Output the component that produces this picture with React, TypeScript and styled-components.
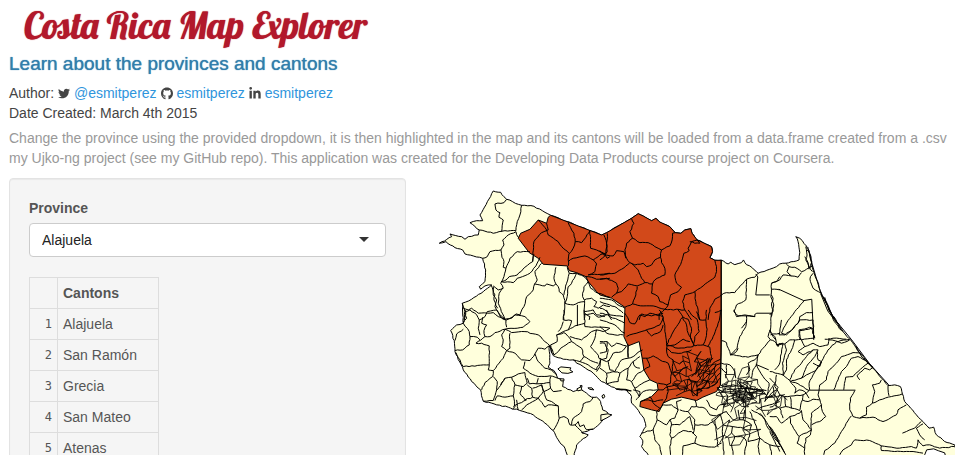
import React, { useState } from "react";
import styled, { createGlobalStyle } from "styled-components";
import { FaGithub, FaLinkedinIn, FaTwitter } from "react-icons/fa";

const GlobalStyle = createGlobalStyle`
  *, *::before, *::after { box-sizing: border-box; }
  body {
    margin: 0;
    background: #fff;
    color: #555;
    font-family: "Liberation Sans", Arial, sans-serif;
    font-size: 14px;
    line-height: 20px;
  }
`;

const Page = styled.div`
  height: 100vh;
  padding-left: 9px;
  overflow: hidden;
`;

const Title = styled.h1`
  margin: 0;
  padding: 4px 0 0 15px;
  color: #b2182b;
  font-family: Lobster, "Liberation Serif", serif;
  font-size: 37px;
  font-weight: 400;
  line-height: 42px;
  text-shadow: 0 0 1px #b2182b;
  white-space: nowrap;
`;

const Subtitle = styled.h2`
  margin: 8px 0 9px;
  color: #317eac;
  font-size: 19px;
  font-weight: 400;
  line-height: 20px;
  text-shadow: 0 0 1px #317eac;
`;

const Meta = styled.p`
  margin: 0;
  color: #444;
  svg {
    height: 13px;
    width: 12px;
    vertical-align: -2px;
    color: #444;
  }
`;

const ProfileLink = styled.a`
  color: #2f95dc;
  text-decoration: none;
`;

const Description = styled.p`
  margin: 5px 0 10px;
  color: #999;
  white-space: nowrap;
`;

const Layout = styled.main`
  display: grid;
  grid-template-columns: 42% 58%;
  align-items: start;
`;

const Sidebar = styled.form`
  padding: 19px;
  border: 1px solid #e3e3e3;
  border-radius: 4px;
  background: #f5f5f5;
  box-shadow: inset 0 1px 1px rgba(0, 0, 0, 0.05);
`;

const FieldLabel = styled.label`
  display: block;
  margin-bottom: 5px;
  font-weight: 700;
`;

const SelectWrap = styled.div`
  position: relative;
  margin-bottom: 20px;
`;

const ProvinceSelect = styled.select`
  display: block;
  width: 100%;
  height: 34px;
  padding: 0 12px;
  border: 1px solid #ccc;
  border-radius: 4px;
  background: #fff;
  color: #222;
  font: inherit;
  appearance: none;
`;

const Caret = styled.span`
  position: absolute;
  top: 14px;
  right: 17px;
  border: 5px solid transparent;
  border-top-color: #333;
  border-bottom: 0;
  pointer-events: none;
`;

const CantonTable = styled.table`
  border-collapse: collapse;
`;

const Cell = styled.td`
  height: 31px;
  min-width: 101px;
  padding: 5px;
  border: 1px solid #ddd;
  text-align: left;
`;

const IndexCell = styled(Cell)`
  min-width: 28px;
  font-family: "DejaVu Sans Mono", monospace;
  font-size: 12px;
  text-align: right;
`;

const Map = styled.svg`
  display: block;
  width: 100%;
  height: auto;
`;

type Point = [number, number];

const parse = (text: string): Point[] =>
  text.trim().split(/\s+/).map((pair) => pair.split(",").map(Number) as Point);

const noise = (n: number) => {
  const v = Math.sin(n * 12.9898) * 43758.5453;
  return v - Math.floor(v) - 0.5;
};

/* Breaks long segments into short ones with a small sideways wobble. */
const roughPath = (points: Point[], step: number, amount: number, closed = false) => {
  const list = closed ? [...points, points[0]] : points;
  const out: string[] = [`M${list[0].join(" ")}`];
  for (let i = 1; i < list.length; i++) {
    const [ax, ay] = list[i - 1];
    const [bx, by] = list[i];
    const length = Math.hypot(bx - ax, by - ay) || 1;
    const parts = Math.max(1, Math.round(length / step));
    for (let k = 1; k <= parts; k++) {
      const t = k / parts;
      const off = k === parts ? 0 : noise(ax * 3 + by * 7 + k * 5) * amount;
      const x = ax + (bx - ax) * t - ((by - ay) / length) * off;
      const y = ay + (by - ay) * t + ((bx - ax) / length) * off;
      out.push(`L${x.toFixed(1)} ${y.toFixed(1)}`);
    }
  }
  return out.join("") + (closed ? "Z" : "");
};

const straightPath = (text: string, closed = false) =>
  "M" + parse(text).map((p) => p.join(" ")).join("L") + (closed ? "Z" : "");

/* A tangle of very small districts. */
const meshPath = (cx: number, cy: number, rx: number, ry: number, step: number) => {
  const cols = Math.ceil(rx / step);
  const rows = Math.ceil(ry / step);
  const at = (i: number, j: number): Point => [
    cx + (i + noise(i * 17 + j * 31 + cx) * 1.3) * step,
    cy + (j + noise(i * 41 + j * 13 + cy) * 1.3) * step,
  ];
  const inside = (i: number, j: number) => Math.hypot((i * step) / rx, (j * step) / ry) <= 1;
  let d = "";
  for (let i = -cols; i <= cols; i++) {
    for (let j = -rows; j <= rows; j++) {
      if (!inside(i, j)) continue;
      const here = at(i, j).map((v) => v.toFixed(1)).join(" ");
      if (inside(i + 1, j) && noise(i * 7 + j * 3) > -0.38) d += `M${here}L${at(i + 1, j).map((v) => v.toFixed(1)).join(" ")}`;
      if (inside(i, j + 1) && noise(i * 5 + j * 11) > -0.38) d += `M${here}L${at(i, j + 1).map((v) => v.toFixed(1)).join(" ")}`;
    }
  }
  return d;
};

const LAND = `493.3,191 500.7,192.3 504,196.7 506.7,199.3 521.7,205.3 534,206.3 550.7,215.3 601.7,235 606.7,232.7
631.7,218.3 638.3,213.7 643.3,216 651.7,220.7 656,218.3 659.3,221.7 670,226.7 675.3,232.7 681,233.3 685,230 691,228.7
692.3,233.3 697.3,240 703.3,242.7 711.7,246.7 712.7,251.7 710,257.7 715,260.3 721.7,260.3 728.3,264 731,262.3
735,264.7 741.7,262.7 743.7,260 746.7,264.7 752.7,268 758.3,273.3 770,269.3 776.7,266.7 780,264 786,263.3
799.3,260 800,252.7 798.3,241.7 796,236.7 800,238.3 806.7,246 809.3,250.7 813.3,270 821.7,293.3 833.3,316.7
841.7,330 851,340 860,353.3 871.7,366.7 888.3,385.7 895,385 900.7,386.7 902.7,394 905,401.7 916.7,415
923.3,421.7 929.3,428.3 934,427.3 936.7,435 945,441.7 955,445 959,460 650,460 648.3,455 641.7,446.7 643,441 640,436.7
646,426.7 644,418.3 636.7,408.3 631.7,403.3 631.7,396.7 626.7,390 616.7,389.3 606.7,384 601.7,381.7
593.3,373.3 583.3,366.7 576.7,363.3 573.3,360 563.3,359.3 553.3,355.7 549.3,346 550,363.3 548.3,367.3 556,374
557.7,378.3 563.3,380 562.7,386.7 573.3,391.7 580,388.3 586.7,393.3 591.7,397.3 596.7,397.3 600.7,401.7 602.7,410
608.3,413.3 601.7,421.7 593.3,429.3 581.7,432.7 588.3,435 576.7,445 573.3,460 567.3,455 565,448.3 558.3,440
553.3,430.7 545,423.3 533.3,415 516.7,409.3 512.7,409.3 508.3,407.3 496.7,405 483.3,401.3 480.7,390 471.7,381.7
463.3,370 455,351.7 454.3,340.7 450.7,330.7 456.7,325 463.3,323.3 462.7,315 462.3,303.3 471.7,299.3 483.3,291.7
491.7,285 485,286 480.7,289.3 479.3,286.7 485,281.7 485.7,270 482.7,258.3 473.3,256 465,254 462.7,250 455,247.7
446,241.7 439.3,243.3 451.7,236.7 450,234 461.7,236.7 465,239.3 468.3,236.7 478.3,235 479.3,230 470,222.7
476.7,220.7 482.7,220.7 480,215`;

const ALAJUELA = `550.7,215.3 601.7,235 606.7,232.7 631.7,218.3 638.3,213.7 643.3,216 651.7,220.7 656,218.3 659.3,221.7
670,226.7 675.3,232.7 681,233.3 685,230 691,228.7 692.3,233.3 697.3,240 703.3,242.7 711.7,246.7 712.7,251.7
710,257.7 715,260.3 721.3,260.3 721.3,353 720.7,385 716.7,391.7 703,397.3 696.7,400.7 681.7,397.3 671.7,399.3 663.3,403.3
659.3,411.7 651.7,410 640,406.7 640.7,401.7 651.7,396.7 658.3,390 657.3,383.3 650,380 644,370 642.3,358.3
639.3,341.7 628.3,346 624,336.7 625,310 625,307.3 611.7,298.3 600,295 596.7,291.7 588.3,281.7 586,276.7
576.7,272.7 569.3,270.7 567.3,266 543.3,264.3 538.3,258.3 529.3,252.7 518.3,238.3 520.7,233.3 530,229.3
538.3,220 546.7,223.3 548.3,217.3`;

const SHEETS: { x: number; y: number; lines: string[] }[] = [
  {
    x: 430,
    y: 180,
    lines: [
      "230,58 222,68 195,72 198,90 210,98 207,112 220,120 215,155",
      "148,150 190,160 225,152 258,152 262,125 270,105 275,76",
      "265,172 258,155 235,165 218,180 222,195 213,210 180,215 172,230 158,235",
      "213,210 216,232 222,245 220,262 228,265 222,290 212,310 220,325 205,330 190,318",
      "228,265 240,235 262,215 300,215",
      "312,222 308,245 285,262 262,285 238,290 225,302 214,305 250,308 262,295 300,280 318,258 330,232",
      "335,250 315,275 322,300 314,312 345,318 350,312 370,318 378,312 372,295 378,262",
      "314,312 310,330 290,350 282,380 270,405 258,402 245,415 225,418",
      "225,418 205,370 208,340 218,325",
      "190,320 190,345 200,360 195,380 210,405 225,418",
      "183,315 195,345 192,360 203,385",
      "378,312 385,320 388,335 400,345 405,362 402,420",
      "412,262 418,280 410,310 402,345",
      "418,280 440,280 462,290 475,305 462,320 458,350 464,362 463,420",
      "440,280 425,310 415,320 412,350 405,370 430,375 445,368 463,365",
      "463,360 485,355 500,365 492,380 505,385 520,375 540,380",
      "475,305 482,325 505,340 540,352",
      "325,120 350,150 355,165 385,185 400,205 417,220",
      "350,130 355,150 335,158 312,185 308,245",
      "415,128 425,150 432,160 436,185 430,205 417,222 415,258",
      "436,185 455,188 468,172 480,152",
      "480,152 482,205 500,210 522,220 532,235 540,230",
      "415,245 430,235 465,228 490,240 500,252 495,275 475,285 540,280",
      "468,290 485,292 500,298 540,295",
      "522,165 530,190 528,220 510,225 490,240",
      "100,385 115,390 125,385 145,400 190,398 205,410 225,418",
      "97,370 105,395 103,420", "463,395 490,390 500,405 525,410", "465,400 480,410 478,420",
    ],
  },
  {
    x: 600,
    y: 180,
    lines: [
      "22,160 20,190 22,215 15,228 0,240",
      "0,212 12,225 40,228 50,212 72,215 80,235 90,248",
      "95,115 102,130 90,155 98,175 80,190 75,210 78,235",
      "98,175 120,188 145,188 165,200 185,210 182,232 165,240 155,255 140,260 130,250 105,255 90,248",
      "185,210 210,198 217,180 218,160 226,158",
      "182,232 185,248 195,265 195,285 165,300 158,312 135,308 125,295 115,270 95,250",
      "90,248 65,268 45,280 0,285", "0,298 20,295 50,310 55,325 50,340 35,352",
      "50,340 65,335 85,312 112,318 135,308",
      "112,320 108,345 98,372 75,382", "98,372 130,378 160,378 195,388",
      "158,312 155,340 175,350 180,365 205,375 195,388",
      "292,180 275,185 265,205 268,212 252,220 245,245 225,285 230,310 245,322 235,335 212,345 205,375",
      "292,180 300,190 285,190 270,185", "345,241 350,260 350,275 345,292 310,318 285,335 255,345 248,365 255,390",
      "285,335 288,365 295,390 300,420", "365,345 345,358 330,385 325,420",
      "195,388 255,390 265,405 275,420", "195,388 180,400 178,420", "118,420 125,402 155,408 190,400",
      "365,345 380,338 405,338 440,298 440,330 438,360 410,375 402,395 415,408 435,405 465,410",
      "440,298 465,292 475,280",
      "515,345 520,355 515,370 518,388 515,410",
      "515,328 540,330", "515,310 530,305 540,290",
      "0,355 35,360 60,378 75,385", "0,365 20,372 45,380 70,400", "0,385 15,390 30,405 70,410", "0,400 25,405 35,420",
    ],
  },
  {
    x: 770,
    y: 220,
    lines: [
      "48,130 58,140 75,142 95,155 110,148 130,138",
      "58,140 52,155 65,168 85,172 95,158",
      "5,208 5,190 30,180 40,165 65,168", "5,208 3,230 12,255 10,275 0,285",
      "130,160 122,170 122,185 130,205 155,220", "108,80 112,105 108,120 118,140 128,155",
      "112,90 122,105 125,128 120,145", "105,110 115,128 118,148", "103,242 75,275 50,310 35,340 50,345 70,325 85,310 90,290 110,278 130,278",
      "160,230 175,262 190,298 205,318 215,332", "165,232 172,250 187,285 207,312 220,335",
      "90,360 90,332 125,325 135,355", "165,358 190,355 230,358", "0,330 10,350 18,360",
    ],
  },
  {
    x: 430,
    y: 310,
    lines: [
      "105,0 110,25 100,40 118,65 120,80 142,82 150,90", "100,58 80,72 75,92", "120,80 118,105 98,120 75,122",
      "100,40 105,5 120,0 140,15 148,30 145,55 150,75", "148,30 165,20 172,5 200,0 215,25 230,30",
      "158,22 155,40 170,45 162,62 165,80 180,80 195,68 225,58",
      "230,30 255,15 285,20 300,35 280,52 225,58", "228,30 230,52", "225,58 245,68 285,65 325,75 345,95 360,108",
      "225,58 215,75 220,90 215,110 230,122 240,115 240,70",
      "78,128 90,150 100,170", "165,80 138,100 155,100 178,108 178,165 100,170", "178,165 175,180 190,182 188,200 165,218 155,240",
      "230,122 220,145 190,182", "230,122 255,130 275,150 300,152 315,132 325,115 345,118 358,108",
      "315,132 325,155 345,175 370,180 380,195", "285,155 280,175 300,190 325,200 360,198 383,205",
      "190,200 202,215 200,240 190,272 160,274", "202,240 225,205 245,202 255,225 250,258 225,262 202,258",
      "225,205 212,225", "245,202 265,192 285,188 292,220 280,230 255,225",
      "250,258 255,290 248,298", "275,230 270,250 285,270 308,262 305,235 292,225",
      "308,235 335,225 340,245 325,265 308,262", "325,205 320,222 360,218 362,200", "360,218 362,235 342,245 335,225",
      "292,205 298,222 320,222", "362,235 370,245 395,242", "342,245 350,270 365,275 385,288 355,285 345,292 325,265",
      "325,265 290,285 275,300", "250,290 275,278 290,270", "202,258 195,272", "260,270 265,300",
      "385,288 388,325 402,320 415,328 420,345 435,345 450,360 460,372",
      "388,325 385,335 370,362", "425,345 430,325 455,305 460,282 480,275 490,262",
      "435,345 445,335 450,350 462,345 470,360 490,358",
      "402,0 400,30 425,32 415,60 400,65 380,75 382,95 362,105 372,135",
      "380,75 402,68 420,85 425,95 400,110 372,135", "420,80 455,90 485,65 500,60",
      "463,0 465,50 505,52 540,55", "465,40 435,48 415,60", "463,15 490,10 505,22 530,15",
      "425,95 455,115 462,140 450,155 430,150", "500,60 495,85 482,110 500,130 512,150",
      "500,60 520,65 540,55", "512,150 530,145 535,120 525,100 510,100", "450,155 475,165 500,180 512,150",
      "512,150 510,170 500,185", "462,140 490,155 505,160", "360,108 365,130", "400,35 395,50 385,65",
    ],
  },
  {
    x: 600,
    y: 310,
    lines: [
      "75,10 90,38 105,42 120,15 135,20 150,10 190,20 178,0",
      "80,80 100,72 135,62 180,45 190,22", "140,60 155,78 182,65 190,45", "190,22 195,55 200,100 200,120",
      "248,22 230,50 215,75 200,105", "248,22 260,45 265,70 280,100", "235,0 250,22 265,28 275,55 272,85 285,108",
      "265,0 275,15 292,28 298,65 285,80 280,110", "290,5 300,30 318,30 322,58 318,85 310,105 285,108",
      "320,0 318,30", "345,8 365,0", "365,0 355,40 340,80 325,108", "200,105 235,115 280,110", "200,115 215,128 245,130 275,120",
      "200,108 225,105 250,88 270,95", "310,105 330,112 335,140 330,160", "127,145 145,145 160,138 180,150 205,160 215,190",
      "200,120 205,140 220,150 215,190 212,220 200,225 175,220", "215,190 225,200 250,175 265,170",
      "200,225 205,245 200,265 190,280", "122,275 145,270 165,275 190,270", "150,260 165,285 180,295", "140,145 150,170 132,180",
      "172,240 190,240 205,230 235,225", "275,200 290,185 300,160 325,145", "285,195 300,175 315,160 330,148",
      "292,200 312,175 322,158 340,145", "300,205 322,180 340,160 362,148", "310,210 332,190 350,165 365,160",
      "318,220 340,198 355,178 363,170", "335,222 350,200 360,190", "320,235 345,225 360,205", "290,240 310,235 320,220",
      "0,30 20,35 45,45 65,65 75,70", "20,0 30,20 55,30 75,40", "0,50 20,70 45,75 70,75", "0,95 22,95 35,110 50,100 80,108",
      "22,95 20,125 0,130", "80,108 65,125 40,130 25,155 30,180 60,190", "85,108 85,145 65,150 45,185 20,190 20,220",
      "0,145 20,155 30,150", "0,175 20,190", "85,145 100,140 118,125 128,120", "60,190 85,175 100,155 120,140",
      "85,175 80,210 95,215 105,235 118,260", "100,155 105,170 120,175", "95,215 115,190 132,180", "60,190 55,215 20,222",
      "105,235 125,222 150,210", "118,260 130,245 150,240 172,240", "100,240 120,245 118,260 108,270", "50,238 65,240 95,243",
      "365,92 380,98 392,135 410,125 415,115", "440,30 438,50 420,80 412,115 392,135 420,138 445,142 475,135",
      "402,0 410,20 440,18 465,20", "440,18 440,35 425,55", "515,10 512,60 505,80 512,90 490,115 475,135 470,165 460,180 455,205",
      "512,75 540,70", "512,90 525,95 535,110 540,100", "475,135 465,150 445,160 450,180 440,195",
      "470,165 490,200 508,220 505,245 495,275", "365,160 390,165 405,185 408,205", "365,175 380,190 378,205", "380,165 380,190",
      "170,305 190,285 215,285 235,300 225,325 210,330 215,345 240,345 270,320 275,340 280,360",
      "170,305 172,330 160,360 125,370", "172,330 200,345 210,330", "160,360 165,390 180,410 185,435", "215,345 210,375 215,385 210,410 212,435",
      "215,385 250,362 275,365 290,380 285,400 250,408 248,435", "285,400 305,408 345,412 365,400",
      "240,300 265,305 285,330 285,345 325,345 345,330 362,315", "285,345 280,372", "345,330 350,370 355,412",
      "235,300 230,275 245,270", "285,270 290,290 315,295 330,315 350,318 380,305", "265,305 275,290 290,290",
      "362,315 370,345 398,350 430,355 455,345", "398,350 395,370 405,380 430,382 440,395 435,435",
      "370,345 368,375 370,400 372,435", "395,370 375,385", "405,380 395,405 400,435", "430,355 450,370 445,395 480,385",
      "450,305 465,340 480,385 510,405 540,410", "455,300 490,320 505,355 540,405", "480,310 505,345 540,395",
      "435,300 430,330 455,345 450,365", "380,305 400,330 430,330", "320,270 330,290 350,300 360,285 380,285", "415,300 420,330",
      "470,300 490,290 510,285 540,275", "495,275 515,250 530,240", "480,385 475,410 480,435", "510,405 515,435",
      "362,225 375,230 400,225 430,230 485,245 500,255", "380,240 430,235 500,242", "390,250 430,250 490,242", "410,210 430,230 450,258",
    ],
  },
  {
    x: 770,
    y: 320,
    lines: [
      "35,0 28,45 45,45 65,32 85,10 90,0", "90,0 130,0 133,55 95,60 88,50 88,30 120,22 133,30",
      "0,30 15,50 20,75 45,72 60,60 95,58", "20,75 40,70 35,100 28,135 15,150", "45,72 50,90 38,130 40,165",
      "75,60 65,90 50,120 50,150 40,168", "95,60 105,80 130,70 150,80 175,75 178,55", "105,80 85,95 100,105 130,90 145,90",
      "130,90 110,110 95,130 75,150 60,180", "145,90 135,110 110,140 95,175 65,182", "142,95 145,120 155,125 150,140 130,130",
      "155,125 140,150 110,165 95,175", "240,60 215,70 200,65 175,90 155,125 130,165 118,190 120,210",
      "178,60 205,65 240,58", "275,100 250,98 215,110 200,130 175,155 170,180 150,195 148,212",
      "295,125 265,110 245,115 230,140 215,155 205,180 192,210", "310,142 295,130 265,155 250,170 228,172 222,210",
      "310,142 300,150 285,145 262,168 270,180", "335,180 330,190 308,195 315,215 308,250",
      "398,222 365,230 330,240 308,250 290,262 290,285 270,295 250,290 240,270 242,235 255,212",
      "355,197 358,228", "245,288 215,335 195,370 165,392 162,405", "270,295 310,292 340,305 380,285 385,270 410,255",
      "455,305 435,325 410,335 398,340", "460,312 440,325 450,345 465,360", "210,405 220,390 245,375 255,360 300,362 335,378",
      "335,378 335,392 375,395 420,395 460,400", "335,378 365,382 390,385 425,380 440,385 445,360 460,378 480,375 510,385 555,380",
      "0,155 40,165 60,182 100,200 118,212", "20,165 15,200 30,225 45,230 100,225 118,212", "60,182 78,205 75,220",
      "0,175 20,195", "0,230 15,225 25,240 10,260 0,262", "45,230 48,260 30,265 15,255", "62,232 65,265 48,260",
      "65,265 90,272 98,240 100,225", "98,240 115,245 130,238 150,240", "95,272 90,280 60,290 35,310 20,290 0,290",
      "30,265 40,295", "60,290 62,310 88,350 125,330 125,280 155,255 145,225 148,212", "95,272 100,300 125,330",
      "155,255 158,275 168,290 150,305 125,315", "88,350 82,370 105,385 105,405", "125,330 122,345 108,355 105,385",
      "0,320 20,350 45,400", "0,335 15,365 30,395", "75,220 88,210 105,215 118,235", "30,225 20,245", "10,200 12,225",
    ],
  },
];

const STRAIGHT = [
  "721.5,260 721.5,340 720.5,385",
  "779,289.3 804,300.7 812,299.3 814,340",
  "756,274 758,277 756,295 770,295",
  "757,313.3 755,314.5 755,317", "757,313.3 772,313.3",
  "809,390.3 855.7,390.3",
  "756,364.5 769,370",
  "769,426 786,455", "628,344 628,357", "577.5,305 577.5,326",
];

const COAST_STROKES = [
  "808,247 812,263 821,293 834,318 852,340 870,364 889,385",
  "856,346 862,357 874,369", "821,294 828,311 837,323",
  "616,389 626,389.5 631,391",
];

const ISLANDS = [
  "558,369 561,367 571,368 570,370 573,372 568,373.5 562,373",
  "560,379 564,379 564,381 561,381", "577,389 581,387 582,390 578,391",
  "588,388 592,388 594,390 590,389.5", "602,396 604,394.5 605,397 603,398.5",
  "601,415 608,414 612,415 607,418 601,421",
  "580,386 582,385.5 582,387.5",
];

const LAGOONS = ["925,455 927,450 934,449 939,451 945,453 946,457 925,457"];

function ProvinceMap() {
  return (
    <Map viewBox="406 178 549 277" role="img" aria-label="Map of Costa Rica with Alajuela highlighted">
      <g stroke="#000" strokeWidth="1" strokeLinejoin="round">
        <path d={roughPath(parse(LAND), 3, 1, true)} fill="#ffffdc" />
        <path d={roughPath(parse(ALAJUELA), 30, 0, true)} fill="#d2491a" />
        {ISLANDS.map((d) => <path key={d} d={straightPath(d, true)} fill="#ffffdc" />)}
        {LAGOONS.map((d) => <path key={d} d={straightPath(d, true)} fill="#fff" />)}
      </g>
      <g fill="none" stroke="#000" strokeWidth="1" strokeLinejoin="round">
        {SHEETS.map((sheet) =>
          sheet.lines.map((line, i) => (
            <path
              key={`${sheet.x}-${sheet.y}-${i}`}
              d={roughPath(parse(line).map(([x, y]): Point => [sheet.x + x / 3, sheet.y + y / 3]), 3, 1)}
            />
          ))
        )}
        {[...STRAIGHT, ...COAST_STROKES].map((d) => <path key={d} d={straightPath(d)} />)}
      </g>
      <g fill="none" stroke="#000" strokeWidth="0.8">
        <path d={meshPath(695, 374, 24, 22, 5)} />
        <path d={meshPath(688, 387, 20, 10, 6)} />
        <path d={meshPath(738, 393, 21, 15, 4)} />
        <path d={meshPath(742, 396, 12, 7, 3)} />
        <path d={meshPath(740, 390, 24, 23, 7)} />
        <path d={meshPath(770, 400, 22, 16, 7)} />
        <path d={meshPath(735, 425, 24, 24, 10)} />
      </g>
    </Map>
  );
}

const PROVINCES = ["Alajuela", "Cartago", "Guanacaste", "Heredia", "Limón", "Puntarenas", "San José"];
const CANTONS = ["Alajuela", "San Ramón", "Grecia", "San Mateo", "Atenas"];

export default function App() {
  const [province, setProvince] = useState("Alajuela");
  return (
    <>
      <GlobalStyle />
      <Page>
        <header>
          <Title>Costa Rica Map Explorer</Title>
          <Subtitle>Learn about the provinces and cantons</Subtitle>
          <Meta>
            Author: <FaTwitter /> <ProfileLink href="#twitter">@esmitperez</ProfileLink>{" "}
            <FaGithub /> <ProfileLink href="#github">esmitperez</ProfileLink>{" "}
            <FaLinkedinIn /> <ProfileLink href="#linkedin">esmitperez</ProfileLink>
          </Meta>
          <Meta>Date Created: March 4th 2015</Meta>
          <Description>
            Change the province using the provided dropdown, it is then highlighted in the map and its cantons will
            be loaded from a data.frame created from a .csv
            <br />
            my Ujko-ng project (see my GitHub repo). This application was created for the Developing Data Products
            course project on Coursera.
          </Description>
        </header>
        <Layout>
          <Sidebar>
            <FieldLabel htmlFor="province">Province</FieldLabel>
            <SelectWrap>
              <ProvinceSelect id="province" value={province} onChange={(e) => setProvince(e.target.value)}>
                {PROVINCES.map((name) => <option key={name}>{name}</option>)}
              </ProvinceSelect>
              <Caret />
            </SelectWrap>
            <CantonTable>
              <thead>
                <tr>
                  <IndexCell as="th" />
                  <Cell as="th" scope="col">Cantons</Cell>
                </tr>
              </thead>
              <tbody>
                {CANTONS.map((name, i) => (
                  <tr key={name}>
                    <IndexCell>{i + 1}</IndexCell>
                    <Cell>{name}</Cell>
                  </tr>
                ))}
              </tbody>
            </CantonTable>
          </Sidebar>
          <ProvinceMap />
        </Layout>
      </Page>
    </>
  );
}
